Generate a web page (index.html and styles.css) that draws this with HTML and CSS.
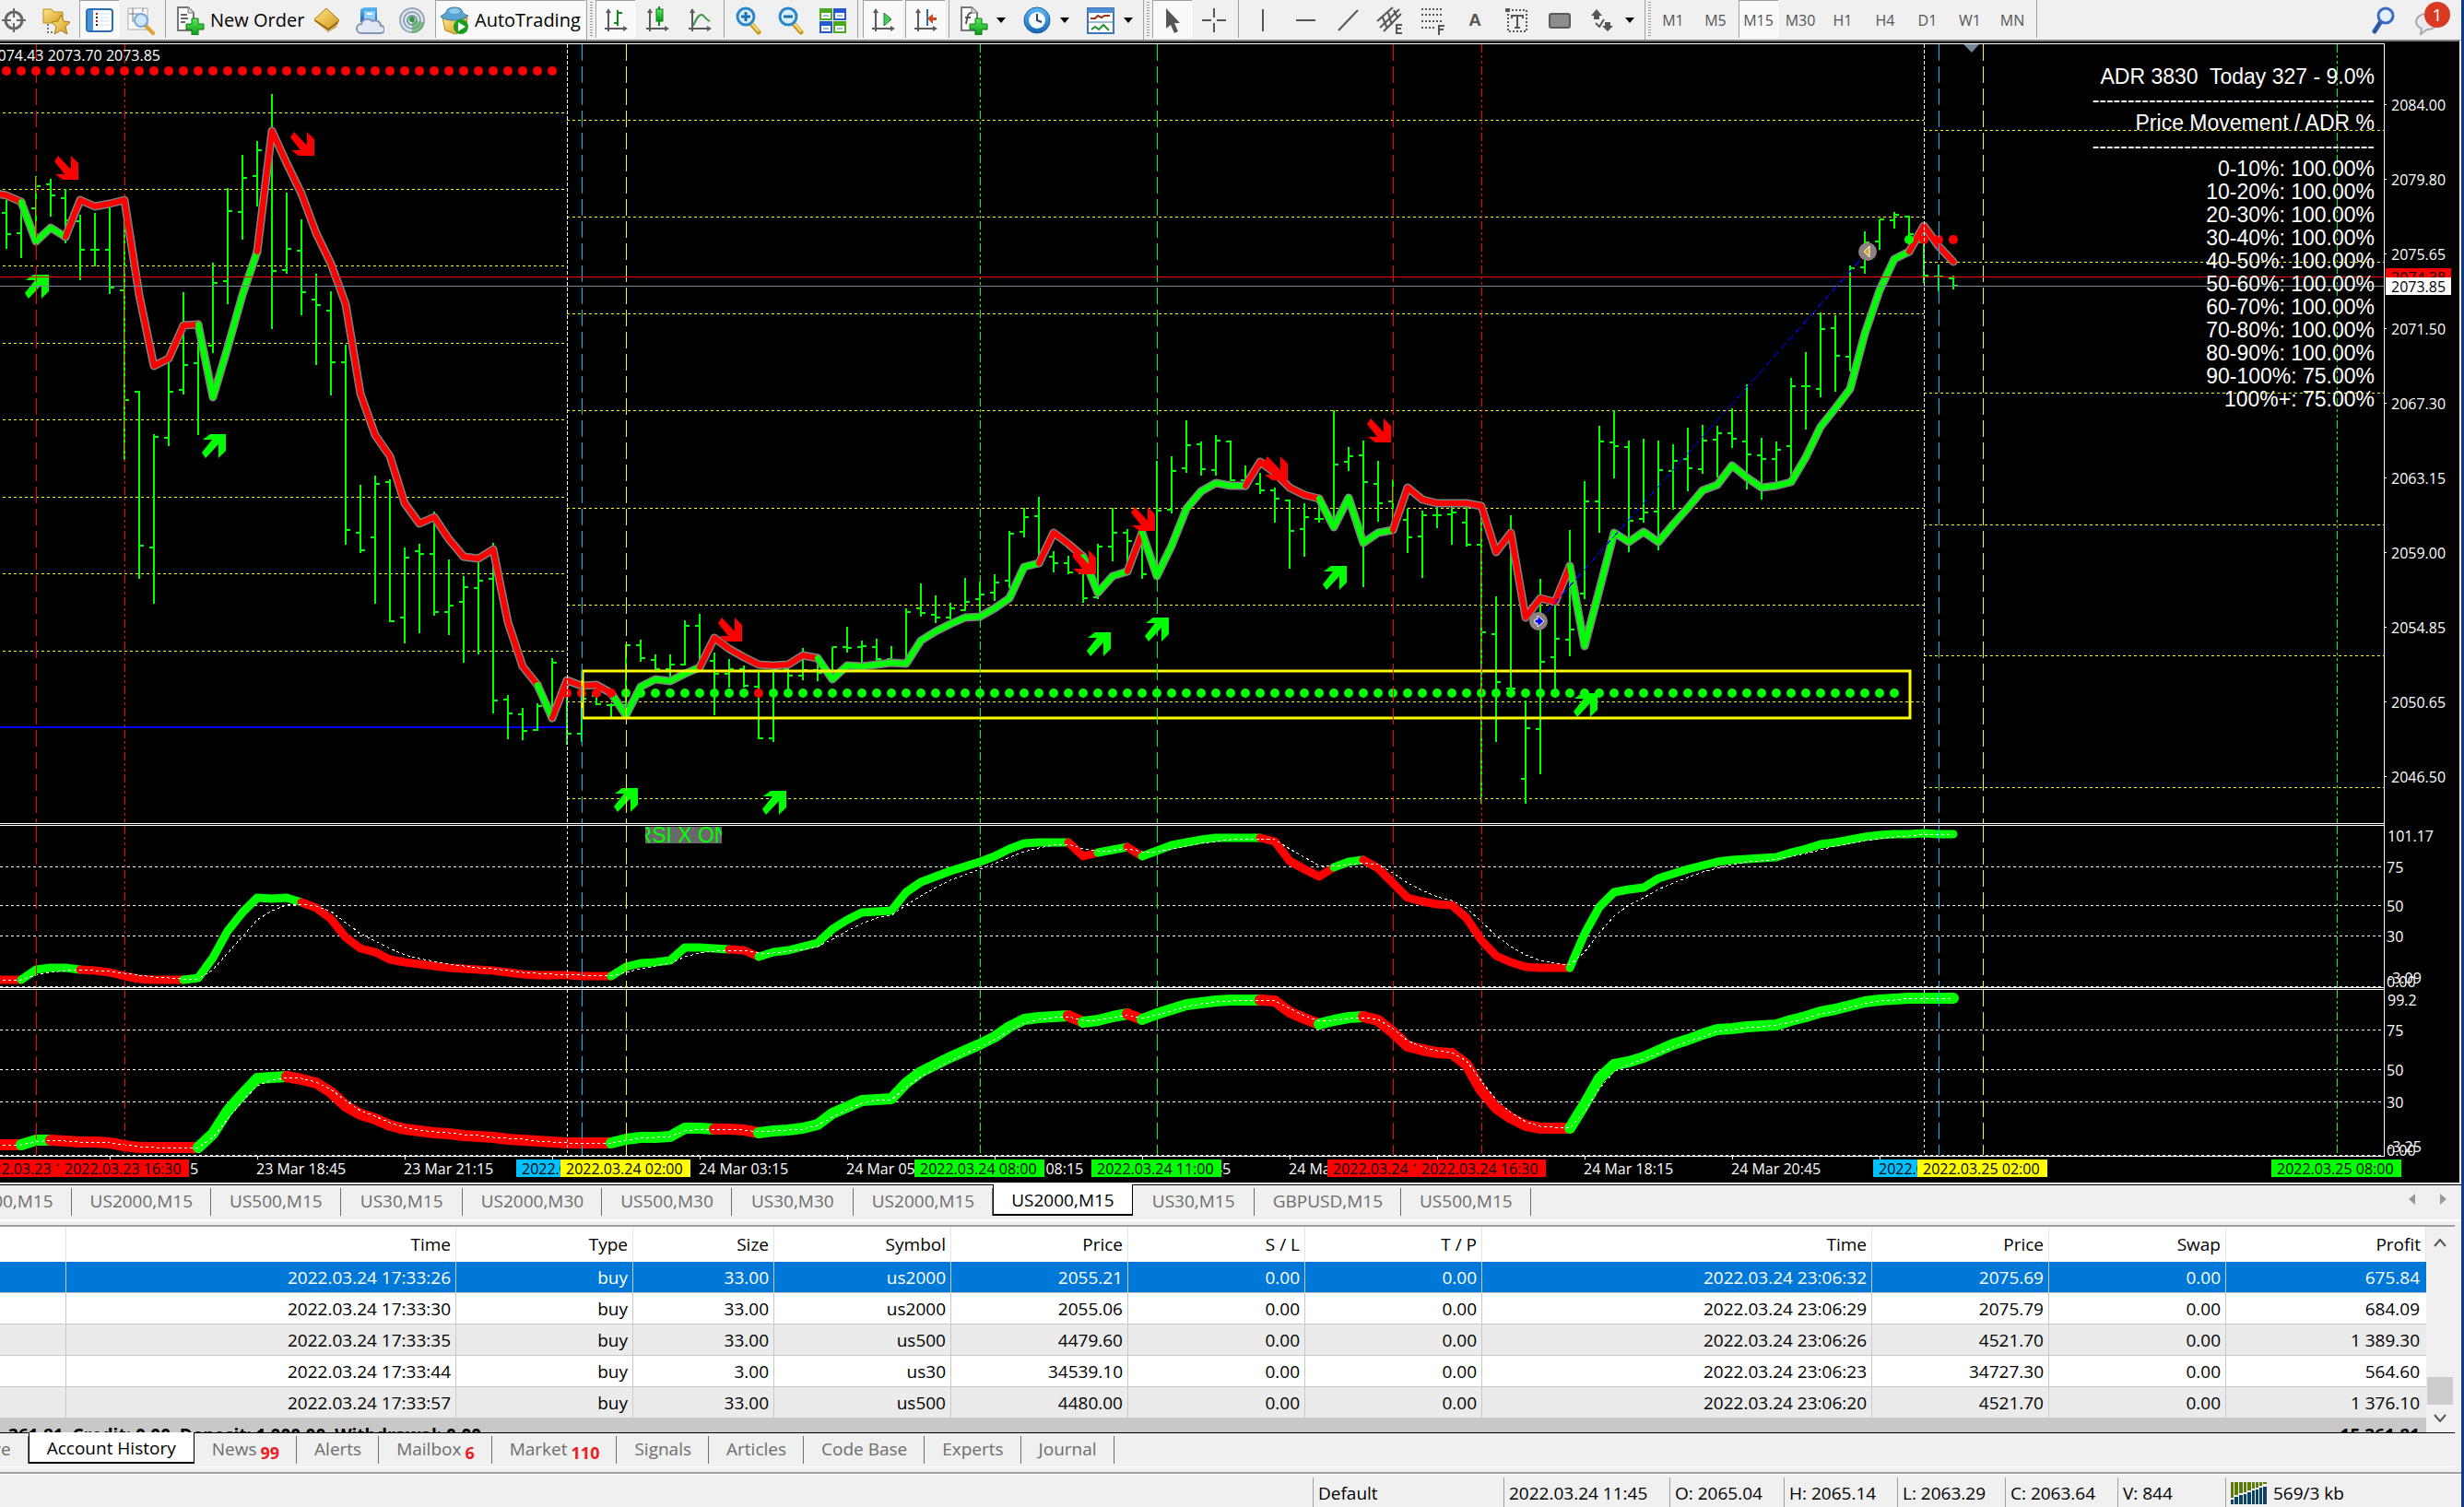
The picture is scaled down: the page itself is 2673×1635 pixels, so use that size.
FILE: index.html
```html
<!DOCTYPE html>
<html lang="en">
<head>
<meta charset="utf-8">
<title>US2000,M15</title>
<link rel="stylesheet" href="styles.css">
</head>
<body>
<svg class="defs" width="0" height="0" aria-hidden="true">
  <defs>
    <linearGradient id="gold" x1="0" y1="0" x2="1" y2="1"><stop offset="0" stop-color="#ffe78a"/><stop offset="1" stop-color="#d29a1c"/></linearGradient>
    <linearGradient id="blue" x1="0" y1="0" x2="0" y2="1"><stop offset="0" stop-color="#5fb8f5"/><stop offset="1" stop-color="#1766b5"/></linearGradient>
    <linearGradient id="green" x1="0" y1="0" x2="0" y2="1"><stop offset="0" stop-color="#5cec5c"/><stop offset="1" stop-color="#0a9a1a"/></linearGradient>
    <symbol id="axes" viewBox="0 0 32 32"><path d="M8 28V5M4 25h23" stroke="#5a5a5a" stroke-width="2" fill="none"/><path d="M5 8l3-5 3 5zM24 22l5 3-5 3z" fill="#5a5a5a"/></symbol>
    <symbol id="docplus" viewBox="0 0 32 32"><path d="M3 2h11l6 6v19H3z" fill="#fff" stroke="#777" stroke-width="2"/><path d="M14 2v6h6" fill="#ddd" stroke="#777"/><path d="M18 14h7v6h6v6h-6v6h-7v-6h-6v-6h6z" fill="url(#green)" stroke="#087a10"/></symbol>
    <symbol id="glass" viewBox="0 0 32 32"><path d="M19 20l8 9" stroke="#c99a22" stroke-width="5" stroke-linecap="round"/><path d="M19 19l8 9" stroke="#ffe27a" stroke-width="2"/><circle cx="13" cy="12" r="9" fill="#d7efff" stroke="#2d86c9" stroke-width="3"/></symbol>
  </defs>
</svg>
<div class="window">
  <header class="toolbar">
    <button class="tool first" aria-label="Crosshair target"><svg class="icon" viewBox="0 0 32 32"><circle cx="16" cy="16" r="9" fill="none" stroke="#666" stroke-width="3"/><path d="M16 3v10M16 19v10M3 16h10M19 16h10" stroke="#666" stroke-width="2"/></svg></button>
    <button class="tool" aria-label="Favorites"><svg class="icon" viewBox="0 0 32 32"><path d="M2 4h9l2 3h10v12H2z" fill="url(#gold)" stroke="#b98b1b"/><path d="M7 20v9h8" fill="none" stroke="#777" stroke-dasharray="2 2" stroke-width="2"/><path d="M21 10l3 7 7 1-5 5 2 8-7-4-7 4 2-8-5-5 7-1z" fill="url(#gold)" stroke="#a87812"/></svg></button>
    <button class="tool on" aria-label="Navigator"><svg class="icon" viewBox="0 0 32 32"><rect x="2" y="4" width="28" height="24" rx="3" fill="#fff" stroke="#2a6fb8" stroke-width="2"/><path d="M3 5h6v22H3z" fill="#4c94d8"/><path d="M12 9h2M12 17h2" stroke="#e00" stroke-width="2"/><path d="M12 13h2M12 21h2" stroke="#222" stroke-width="2"/><path d="M16 9h11M16 13h11M16 17h11M16 21h11" stroke="#cfe3f7"/></svg></button>
    <button class="tool" aria-label="Data window"><svg class="icon" viewBox="0 0 32 32"><path d="M2 3h21v23H2z" fill="#fafafa" stroke="#aaa"/><path d="M7 3v15M3 9h10M18 3v4" stroke="#777"/><path d="M21 22l8 8" stroke="#d6a32b" stroke-width="4" stroke-linecap="round"/><circle cx="16" cy="16" r="7" fill="#cde8fb" stroke="#7aa7cf" stroke-width="2"/></svg></button>
    <span class="sep"></span>
    <button class="tool wide"><svg class="icon" viewBox="0 0 32 32"><use href="#docplus"/><path d="M6 10h7M6 14h8M6 18h5" stroke="#666" stroke-width="2"/></svg>New Order</button>
    <button class="tool" aria-label="MetaEditor"><svg class="icon" viewBox="0 0 32 32"><path d="M15 3l14 13-3 7-9 6L2 17z" fill="#9a6410"/><path d="M15 3l14 13-12 9L2 15z" fill="url(#gold)" stroke="#b47a14"/><path d="M3 18l14 10 11-8" stroke="#fff2c0" fill="none"/></svg></button>
    <button class="tool" aria-label="Cloud"><svg class="icon" viewBox="0 0 32 32"><path d="M6 4l4-2h14v16H6z" fill="url(#blue)"/><path d="M10 6h12v12H10z" fill="#8fd0fa"/><path d="M13 9h6" stroke="#fff" stroke-width="2"/><path d="M7 30a5 5 0 010-10 7 7 0 0112-3 6 6 0 019 5 4 4 0 010 8z" fill="#e3e9f5" stroke="#8694b8" stroke-width="2"/></svg></button>
    <button class="tool" aria-label="Signals"><svg class="icon" viewBox="0 0 32 32"><circle cx="16" cy="16" r="13" fill="#e3eaf1" stroke="#9aa9ba" stroke-width="2"/><circle cx="16" cy="16" r="9" fill="none" stroke="#8ca0b6" stroke-width="2"/><circle cx="16" cy="16" r="5" fill="none" stroke="#7490aa" stroke-width="2"/><path d="M16 16v14c8 0 13-6 13-12" fill="#49a84f" opacity=".6"/><circle cx="16" cy="15" r="3" fill="#2f9a3c"/></svg></button>
    <button class="tool wide on auto"><svg class="icon" viewBox="0 0 32 32"><path d="M3 13l3 14 11 4 11-5 2-13z" fill="url(#gold)" stroke="#b4831a"/><path d="M1 12c3-3 5-2 7-7 2-4 14-4 16 0 1 4 4 5 7 6-5 6-24 7-30 1z" fill="#5aa3cf" stroke="#39789f"/><ellipse cx="16" cy="6" rx="6" ry="3" fill="#8cc8ea"/><circle cx="23" cy="23" r="8" fill="#14a01e"/><path d="M20 18v10l8-5z" fill="#fff"/></svg>AutoTrading</button>
    <span class="grip"></span>
    <button class="tool on" aria-label="Bar chart"><svg class="icon" viewBox="0 0 32 32"><use href="#axes"/><path d="M18 5v17M14 19h4M18 8h5" stroke="#0a8a1a" stroke-width="2"/></svg></button>
    <button class="tool" aria-label="Candlesticks"><svg class="icon" viewBox="0 0 32 32"><use href="#axes"/><path d="M18 1v21" stroke="#0a8a1a" stroke-width="2"/><rect x="15" y="4" width="7" height="13" fill="url(#green)" stroke="#0a7a1a"/></svg></button>
    <button class="tool" aria-label="Line chart"><svg class="icon" viewBox="0 0 32 32"><use href="#axes"/><path d="M9 22c4-9 6-12 9-12s4 5 9 7" stroke="#3b9a48" fill="none" stroke-width="2"/></svg></button>
    <span class="sep"></span>
    <button class="tool" aria-label="Zoom in"><svg class="icon" viewBox="0 0 32 32"><use href="#glass"/><path d="M8 12h10M13 7v10" stroke="#1e6fae" stroke-width="3"/></svg></button>
    <button class="tool" aria-label="Zoom out"><svg class="icon" viewBox="0 0 32 32"><use href="#glass"/><path d="M8 12h10" stroke="#1e6fae" stroke-width="3"/></svg></button>
    <button class="tool" aria-label="Tile windows"><svg class="icon" viewBox="0 0 32 32"><path d="M1 3h14v13H1zM16 17h14v13H16z" fill="#4ba81c"/><path d="M16 3h14v13H16zM1 17h14v13H1z" fill="#2358cf"/><path d="M3 8h10v6H3zM18 8h10v6H18zM3 22h10v6H3zM18 22h10v6H18z" fill="#fff"/><path d="M5 11h6M20 11h6M5 25h6M20 25h6" stroke="#9bc" stroke-width="2"/></svg></button>
    <span class="sep"></span>
    <button class="tool on" aria-label="Auto scroll"><svg class="icon" viewBox="0 0 32 32"><use href="#axes"/><path d="M17 8l8 7-8 7z" fill="#49c95a" stroke="#13862a"/></svg></button>
    <button class="tool on" aria-label="Chart shift"><svg class="icon" viewBox="0 0 32 32"><use href="#axes"/><path d="M18 4v18" stroke="#2a6fa8" stroke-width="2"/><path d="M18 14l6-5v4h4v3h-4v4z" fill="#d4471a"/></svg></button>
    <span class="sep"></span>
    <button class="tool" aria-label="Indicators"><svg class="icon" viewBox="0 0 32 32"><use href="#docplus"/><path d="M8 20c2-12 3-12 6-12M7 13h6" stroke="#555" fill="none" stroke-width="2"/></svg></button><button class="drop" aria-label="Indicator list"><svg viewBox="0 0 10 6"><path d="M0 0h10L5 6z"/></svg></button>
    <button class="tool" aria-label="Periods"><svg class="icon" viewBox="0 0 32 32"><circle cx="16" cy="16" r="14" fill="url(#blue)" stroke="#155c9f"/><circle cx="16" cy="16" r="9" fill="#f5fbff"/><path d="M16 9v7l5 2" stroke="#345" stroke-width="2" fill="none"/></svg></button><button class="drop" aria-label="Period list"><svg viewBox="0 0 10 6"><path d="M0 0h10L5 6z"/></svg></button>
    <button class="tool" aria-label="Templates"><svg class="icon" viewBox="0 0 32 32"><rect x="2" y="3" width="28" height="27" fill="#fff" stroke="#3d77b8" stroke-width="2"/><path d="M2 3h28v5H2z" fill="#4c8ed6"/><path d="M5 14h5l3-3 4 2 3-2h6" stroke="#a33018" fill="none" stroke-width="2"/><path d="M2 18h28" stroke="#3d77b8"/><path d="M6 26l4-3 4 3 5-5 6 6" stroke="#21902c" fill="none" stroke-width="2"/></svg></button><button class="drop" aria-label="Template list"><svg viewBox="0 0 10 6"><path d="M0 0h10L5 6z"/></svg></button>
    <span class="grip"></span>
    <button class="tool on" aria-label="Cursor"><svg class="icon" viewBox="0 0 32 32"><path d="M9 3v22l5-4 4 9 4-2-4-9h6z" fill="#555"/></svg></button>
    <button class="tool" aria-label="Crosshair"><svg class="icon" viewBox="0 0 32 32"><path d="M16 3v10M16 19v10M3 16h10M19 16h10" stroke="#555" stroke-width="2"/></svg></button>
    <span class="sep"></span>
    <button class="tool" aria-label="Vertical line"><svg class="icon" viewBox="0 0 32 32"><path d="M16 4v24" stroke="#555" stroke-width="2"/></svg></button>
    <button class="tool" aria-label="Horizontal line"><svg class="icon" viewBox="0 0 32 32"><path d="M6 16h21" stroke="#555" stroke-width="2"/></svg></button>
    <button class="tool" aria-label="Trendline"><svg class="icon" viewBox="0 0 32 32"><path d="M6 27L27 5" stroke="#555" stroke-width="2"/></svg></button>
    <button class="tool" aria-label="Channel"><svg class="icon" viewBox="0 0 32 32"><path d="M2 17L19 2M5 24L26 4M9 28L28 9M8 13l5 12M14 8l4 13M20 5l4 8" stroke="#555" stroke-width="2"/><path d="M29 21h-6v9h6M23 25h5" stroke="#555" fill="none" stroke-width="2"/></svg></button>
    <button class="tool" aria-label="Fibonacci"><svg class="icon" viewBox="0 0 32 32"><path d="M4 4h24M4 10h24M4 17h24M4 24h15" stroke="#555" stroke-width="2" stroke-dasharray="2 2"/><path d="M29 22h-6v10M23 26h5" stroke="#555" fill="none" stroke-width="2"/></svg></button>
    <button class="tool glyph">A</button>
    <button class="tool" aria-label="Text label"><svg class="icon" viewBox="0 0 32 32"><rect x="6" y="5" width="20" height="23" fill="none" stroke="#555" stroke-width="2" stroke-dasharray="2 2"/><path d="M10 11h12M16 11v13M13 24h6M10 10v4M22 10v4" stroke="#555" stroke-width="2"/><path d="M3 3h5v4H3z" fill="#555"/></svg></button>
    <button class="tool" aria-label="Rectangle"><svg class="icon" viewBox="0 0 32 32"><rect x="5" y="9" width="22" height="15" rx="2" fill="#8c8c8c" stroke="#5a5a5a" stroke-width="2"/></svg></button>
    <button class="tool" aria-label="Arrows"><svg class="icon" viewBox="0 0 32 32"><path d="M10 4l6 7h-3v4H7v-4H4zM22 28l6-6h-3v-4h-6v4h-3z" fill="#555"/><path d="M9 19l4 4 5-8" stroke="#555" fill="none" stroke-width="2"/></svg></button><button class="drop" aria-label="Arrow list"><svg viewBox="0 0 10 6"><path d="M0 0h10L5 6z"/></svg></button>
    <span class="grip"></span>
    <button class="tool period">M1</button>
    <button class="tool period">M5</button>
    <button class="tool period on">M15</button>
    <button class="tool period">M30</button>
    <button class="tool period">H1</button>
    <button class="tool period">H4</button>
    <button class="tool period">D1</button>
    <button class="tool period">W1</button>
    <button class="tool period">MN</button>
    <span class="sep"></span>
    <div class="tools-end">
      <button class="tool" aria-label="Search"><svg class="icon" viewBox="0 0 32 32"><path d="M13 17L6 28" stroke="#2a58a8" stroke-width="5" stroke-linecap="round"/><circle cx="18" cy="11" r="8" fill="#e6f1ff" stroke="#3a6cc4" stroke-width="3"/></svg></button>
      <button class="tool chat"><svg class="icon" viewBox="0 0 32 32" aria-hidden="true"><path d="M13 9c7 0 12 4 12 9s-5 8-11 8l-7 5 1-6c-4-2-6-4-6-7 0-5 5-9 11-9z" fill="#e9e9ef" stroke="#aaa" stroke-width="2"/></svg><span class="badge">1</span></button>
    </div>
  </header>

  <main class="chart">
    <svg id="plot" viewBox="0 45 2668 1238" role="img" aria-label="US2000 M15 chart"></svg>
  </main>

  <nav class="tabs charts">
    <button class="tab cut">US500,M15</button>
    <button class="tab">US2000,M15</button>
    <button class="tab">US500,M15</button>
    <button class="tab">US30,M15</button>
    <button class="tab">US2000,M30</button>
    <button class="tab">US500,M30</button>
    <button class="tab">US30,M30</button>
    <button class="tab">US2000,M15</button>
    <button class="tab active">US2000,M15</button>
    <button class="tab">US30,M15</button>
    <button class="tab">GBPUSD,M15</button>
    <button class="tab">US500,M15</button>
    <div class="scrolls">
      <button class="arrow" aria-label="Scroll tabs left"><svg viewBox="0 0 7 12"><path d="M7 0v12L0 6z" fill="#999"/></svg></button>
      <button class="arrow" aria-label="Scroll tabs right"><svg viewBox="0 0 7 12"><path d="M0 0v12l7-6z" fill="#999"/></svg></button>
    </div>
  </nav>

  <section class="terminal">
    <div class="history">
      <table>
        <colgroup><col><col class="w-time"><col class="w-num"><col class="w-size"><col class="w-num"><col class="w-num"><col class="w-num"><col class="w-num"><col class="w-time"><col class="w-num"><col class="w-num"><col class="w-profit"></colgroup>
        <thead><tr><th></th><th>Time</th><th>Type</th><th>Size</th><th>Symbol</th><th>Price</th><th>S / L</th><th>T / P</th><th>Time</th><th>Price</th><th>Swap</th><th>Profit</th></tr></thead>
        <tbody>
          <tr class="selected"><td></td><td>2022.03.24 17:33:26</td><td>buy</td><td>33.00</td><td>us2000</td><td>2055.21</td><td>0.00</td><td>0.00</td><td>2022.03.24 23:06:32</td><td>2075.69</td><td>0.00</td><td>675.84</td></tr>
          <tr><td></td><td>2022.03.24 17:33:30</td><td>buy</td><td>33.00</td><td>us2000</td><td>2055.06</td><td>0.00</td><td>0.00</td><td>2022.03.24 23:06:29</td><td>2075.79</td><td>0.00</td><td>684.09</td></tr>
          <tr class="alt"><td></td><td>2022.03.24 17:33:35</td><td>buy</td><td>33.00</td><td>us500</td><td>4479.60</td><td>0.00</td><td>0.00</td><td>2022.03.24 23:06:26</td><td>4521.70</td><td>0.00</td><td>1 389.30</td></tr>
          <tr><td></td><td>2022.03.24 17:33:44</td><td>buy</td><td>3.00</td><td>us30</td><td>34539.10</td><td>0.00</td><td>0.00</td><td>2022.03.24 23:06:23</td><td>34727.30</td><td>0.00</td><td>564.60</td></tr>
          <tr class="alt"><td></td><td>2022.03.24 17:33:57</td><td>buy</td><td>33.00</td><td>us500</td><td>4480.00</td><td>0.00</td><td>0.00</td><td>2022.03.24 23:06:20</td><td>4521.70</td><td>0.00</td><td>1 376.10</td></tr>
        </tbody>
        <tfoot><tr><td colspan="11">361.81&nbsp; Credit: 0.00&nbsp; Deposit: 1 000.00&nbsp; Withdrawal: 0.00</td><td>15 361.81</td></tr></tfoot>
      </table>
    </div>
    <div class="scrollbar">
      <button class="arrow" aria-label="Scroll up"><svg viewBox="0 0 14 10"><path d="M1 9l6-7 6 7" fill="none" stroke="#555" stroke-width="2"/></svg></button>
      <span class="thumb"></span>
      <button class="arrow" aria-label="Scroll down"><svg viewBox="0 0 14 10"><path d="M1 1l6 7 6-7" fill="none" stroke="#555" stroke-width="2"/></svg></button>
    </div>
  </section>

  <nav class="tabs panels">
    <button class="tab cut">Exposure</button>
    <button class="tab active">Account History</button>
    <button class="tab">News<b>99</b></button>
    <button class="tab">Alerts</button>
    <button class="tab">Mailbox<b>6</b></button>
    <button class="tab">Market<b>110</b></button>
    <button class="tab">Signals</button>
    <button class="tab">Articles</button>
    <button class="tab">Code Base</button>
    <button class="tab">Experts</button>
    <button class="tab">Journal</button>
  </nav>

  <footer class="status">
    <span></span><span>Default</span><span>2022.03.24 11:45</span><span>O: 2065.04</span><span>H: 2065.14</span><span>L: 2063.29</span><span>C: 2063.64</span><span>V: 844</span>
    <span class="net"><svg viewBox="0 0 39 24" aria-hidden="true"><path d="M0 0h3v17H0zM4 0h4v14H4zM9 0h4v12H9zM14 0h3v11h-3zM18 0h4v9h-4zM23 0h3v7h-3zM27 0h3v6h-3zM31 0h3v4h-3zM35 0h4v2h-4z" fill="#5d7a0c"/><path d="M0 19h3v5H0zM4 16h4v8H4zM9 14h4v10H9zM14 13h3v11h-3zM18 11h4v13h-4zM23 9h3v15h-3zM27 8h3v16h-3zM31 6h3v18h-3zM35 5h4v19h-4z" fill="#0b4462"/></svg>569/3 kb</span>
  </footer>
</div>
<script src="chart.js"></script>
</body>
</html>
```
FILE: styles.css
```css
* { box-sizing: border-box; }
body {
  margin: 0;
  background: #0b3a86;
  color: #000;
  font: 19px/24px "Open Sans", "Noto Sans", sans-serif;
}
button {
  border: 0;
  margin: 0;
  padding: 0;
  background: none;
  color: inherit;
  font: inherit;
  white-space: nowrap;
}
.defs { position: absolute; }
.window {
  display: flex;
  flex-direction: column;
  min-height: 100vh;
  margin-right: 3px;
  background: #f0f0f0;
  overflow: hidden;
}

/* Toolbar */
.toolbar {
  display: flex;
  height: 43px;
}
.tool {
  display: flex;
  flex: none;
  align-items: center;
  justify-content: center;
  width: 46px;
}
.first { margin-left: -8px; }
.icon {
  flex: none;
  width: 32px;
  height: 32px;
}
.wide {
  justify-content: flex-start;
  gap: 6px;
  width: 149px;
  padding-left: 7px;
  font-size: 20px;
}
.on {
  background: #f9f9f9;
  box-shadow: inset 1px 1px #a0a0a0, inset -1px -1px #fff;
  margin: 0 1px 2px 2px;
  padding-top: 2px;
  width: 43px;
}
.auto {
  width: 163px;
  padding-left: 5px;
}
.sep {
  flex: none;
  width: 7px;
  margin-bottom: 2px;
  background: linear-gradient(#a0a0a0, #a0a0a0) 3px 0 / 1px 100% no-repeat;
}
.grip {
  flex: none;
  width: 8px;
  border-left: 1px solid #a0a0a0;
  background: repeating-linear-gradient(#999 0 1px, #f0f0f0 1px 3px) 3px 2px / 3px 38px no-repeat;
}
.drop {
  display: flex;
  flex: none;
  align-items: center;
  width: 23px;
  padding-left: 2px;
}
.drop svg {
  width: 10px;
  height: 6px;
}
.glyph {
  color: #555;
  font: bold 19px/40px "Liberation Sans", sans-serif;
}
.period {
  color: #555;
  font-size: 16px;
  font-weight: 500;
}
.tools-end {
  display: flex;
  gap: 3px;
  margin-left: auto;
  padding-right: 12px;
}
.chat { position: relative; }
.badge {
  position: absolute;
  top: 2px;
  right: 0;
  width: 28px;
  height: 28px;
  border-radius: 14px;
  background: #d93a22;
  color: #fff;
  line-height: 28px;
}

/* Chart */
.chart {
  border-top: 2px solid #808080;
  border-right: 2px solid #fff;
  background: #000;
}
#plot {
  display: block;
  width: 100%;
  height: auto;
  font: 16px "Open Sans", "Noto Sans", sans-serif;
}
.chart .stats, .chart .tag { font: 23px "Liberation Sans", Arial, sans-serif; }

/* Tab strips */
.tabs {
  display: flex;
  align-items: flex-start;
  border-bottom: 2px solid #fff;
  color: #6d6d6d;
}
.charts {
  height: 40px;
  border-top: 1px solid #000;
  margin-top: 2px;
}
.tab {
  position: relative;
  flex: none;
  height: 34px;
  padding: 0 20px;
}
.charts .tab { min-width: 132px; }
.tab::after {
  content: "";
  position: absolute;
  top: 3px;
  right: 0;
  width: 1px;
  height: 30px;
  background: #6d6d6d;
}
.charts .cut { margin-left: -63px; }
.tab.active {
  margin-top: -1px;
  border: 1px solid #000;
  border-top: 0;
  border-bottom-width: 2px;
  background: #fff;
  color: #000;
}
.charts .active, .panels .active { padding-top: 2px; }
.charts .active {
  padding-right: 19px;
  padding-left: 19px;
}
.tab.active::after { display: none; }
.arrow {
  display: flex;
  justify-content: center;
}
.scrolls {
  display: flex;
  gap: 27px;
  margin-left: auto;
  padding: 9px 16px 0 0;
}
.scrolls svg {
  width: 7px;
  height: 12px;
}

/* Account history */
.terminal {
  display: flex;
  margin: 4px 7px 0 0;
  padding-right: 2px;
  border-top: 2px solid #a0a0a0;
}
.history {
  flex: 1;
  height: 223px;
  overflow: hidden;
  background: #fff;
}
table {
  width: 100%;
  border-collapse: separate;
  border-spacing: 0;
  table-layout: fixed;
}
.w-time { width: 423px; }
.w-num { width: 192px; }
.w-size { width: 153px; }
.w-profit { width: 217px; }
th, td {
  height: 34px;
  padding: 1px 5px 0 0;
  border-right: 1px solid #c8c8c8;
  border-bottom: 1px solid #c8c8c8;
  font-weight: 400;
  text-align: right;
}
th {
  height: 38px;
  padding-top: 0;
  border-right-color: #e5e5e5;
  border-bottom: 0;
}
td:last-child { padding-right: 7px; border-right: 0; }
.selected { background: #0078d7; color: #fff; }
.alt { background: #ebebeb; }
tfoot { background: #c8c8c8; }
tfoot td {
  border: 0;
  font-weight: 700;
}
tfoot td:first-child {
  padding-left: 9px;
  text-align: left;
}
.scrollbar {
  display: flex;
  flex-direction: column;
  width: 29px;
  padding: 12px 0 10px 1px;
}
.scrollbar svg {
  width: 14px;
  height: 10px;
}
.thumb {
  height: 30px;
  margin: auto 0 10px;
  background: #cdcdcd;
}

/* Terminal panels */
.panels {
  height: 38px;
  margin-right: 7px;
  border-top: 1px solid #000;
  border-bottom-width: 1px;
}
.panels .tab {
  padding-right: 19px;
  padding-left: 19px;
}
.panels .cut { margin-left: -90px; }
.panels b {
  margin-left: 4px;
  color: #ed1c24;
  font-size: 18px;
  vertical-align: -4px;
  line-height: 10px;
}

/* Status bar */
.status {
  display: grid;
  flex: 1;
  grid-template-columns: 1fr 207px 180px 124px 123px 117px 122px 117px 256px;
  margin-top: 5px;
  padding-top: 4px;
  border-top: 2px solid #a0a0a0;
  box-shadow: inset 0 1px #fff;
}
.status span {
  padding: 5px 0 0 5px;
  border-left: 1px solid #a0a0a0;
}
.status span:first-child { border: 0; }
.status .net {
  display: flex;
  gap: 7px;
}
.net svg {
  width: 39px;
  height: 24px;
}
```
FILE: chart.js
```js
const plot = document.getElementById('plot');
const GREEN = '#00ff00', RED = '#ff0000', YELLOW = '#ffff00', WHITE = '#ffffff', SKY = '#00bfff';
const X = i => 7 + 16 * i;

function add(tag, attrs, text) {
  const el = document.createElementNS('http://www.w3.org/2000/svg', tag);
  for (const k in attrs) el.setAttribute(k, attrs[k]);
  if (text) el.textContent = text;
  plot.appendChild(el);
  return el;
}
// Straight rule; hairlines are centred on the pixel row or column they fill
function line(x1, y1, x2, y2, stroke, width = 1, dash) {
  const half = width % 2 / 2;
  const dx = x1 === x2 ? half : 0, dy = y1 === y2 ? half : 0;
  const a = { x1: x1 + dx, y1: y1 + dy, x2: x2 + dx, y2: y2 + dy, stroke, 'stroke-width': width };
  if (dash) a['stroke-dasharray'] = dash;
  add('line', a);
}
const label = (x, y, text, fill) => add('text', { x, y: y + 6, fill: fill || WHITE }, text);

// Horizontal grid levels for the previous, current and next session
for (const y of [122, 205, 288, 372, 455, 539, 622, 706]) line(3, y, 613, y, YELLOW, 1, '3 3');
for (const y of [130, 235, 340, 445, 551, 656, 761, 866]) line(615, y, 2087, y, YELLOW, 1, '3 3');
for (const y of [141, 284, 426, 569, 711, 854]) line(2087, y, 2586, y, YELLOW, 1, '3 3');
for (const y of [940, 982, 1015, 1070, 1117, 1160, 1195, 1253]) line(0, y, 2586, y, WHITE, 1, '3 3');
line(0, 789, 615, 789, '#0000ff', 2);

// Bars: high, low, open, close
const bars = [
  [217,270,231,254],[218,280,253,226],[191,262,226,202],[194,235,200,212],[205,264,215,239],[233,304,240,271],[231,289,271,271],[225,319,271,312],
  [214,499,315,434],[424,628,425,592],[471,655,594,474],[392,484,475,425],[317,428,423,396],[353,472,394,375],[285,383,375,307],[204,330,305,229],
  [168,260,230,193],[153,224,191,163],[102,357,163,294],[209,297,293,270],[238,342,272,317],[297,396,325,331],[316,429,337,393],[374,591,393,575],
  [526,600,578,597],[516,655,583,525],[520,675,523,674],[594,698,670,605],[590,687,598,601],[555,668,601,664],[607,689,664,657],[625,719,653,637],
  [607,710,638,630],[589,774,628,760],[754,802,759,774],[768,803,775,793],[763,793,792,766],[714,778,766,719],[737,808,740,796],[745,805,796,758],
  [747,765,755,764],[763,778,765,765],[699,778,765,700],[694,718,700,714],[710,727,716,726],[710,737,726,721],[673,722,721,679],[666,723,679,722],
  [708,776,717,731],[715,746,731,726],[722,746,726,744],[728,802,745,801],[723,805,801,726],[722,748,726,733],[703,738,733,727],[715,739,727,730],
  [702,730,730,702],[680,708,702,703],[695,720,702,701],[693,717,702,715],[701,717,715,717],[660,718,717,664],[633,669,660,665],[646,676,667,670],
  [654,672,670,660],[627,663,662,653],[631,667,650,645],[623,652,643,632],[576,638,630,579],[551,583,577,561],[539,610,560,604],[598,621,604,611],
  [603,623,611,621],[620,654,622,649],[590,650,648,593],[551,609,593,578],[574,620,578,587],[575,628,587,623],[500,625,623,554],[495,557,553,511],
  [456,513,508,483],[479,516,482,509],[472,516,510,478],[478,522,479,521],[505,525,521,521],[513,536,525,532],[529,567,532,541],[542,617,543,576],
  [546,604,574,561],[545,567,563,563],[445,572,563,504],[485,511,501,495],[478,637,494,523],[500,566,525,546],[520,575,544,560],[552,600,564,583],
  [554,627,582,559],[547,573,559,559],[550,591,558,556],[550,593,567,591],[560,872,591,686],[647,805,688,740],[559,748,747,747],[760,872,845,790],
  [628,840,791,718],[650,757,713,693],[575,712,694,683],[522,650,644,544],[462,578,544,479],[445,519,480,484],[478,599,485,565],[476,567,563,556],
  [478,597,555,510],[482,553,511,500],[464,533,498,508],[461,514,509,478],[462,518,477,470],[443,486,470,476],[417,531,479,493],[475,542,494,498],
  [479,524,498,488],[410,522,484,419],[382,466,419,419],[339,431,422,357],[342,425,356,386],[288,403,387,291],[251,297,290,263],[238,271,262,238],
  [230,248,239,233],[234,270,235,254],[263,307,263,299],[287,316,300,300],[299,314,302,310]
];
bars.forEach(([h, l, o, c], i) => {
  const x = X(i);
  line(x, h, x, l, GREEN, 2);
  line(x - 5, o, x, o, GREEN, 2);
  line(x, c, x + 5, c, GREEN, 2);
});

// A run is [colour, first index, values...]; each run begins on the last point of the one before
function drawRuns(runs, width, outline) {
  const paths = runs.map(([color, start, ...ys]) => ({ color, d: ys.map((y, k) => X(start + k) + ',' + y).join(' ') }));
  const common = { fill: 'none', 'stroke-linejoin': 'round', 'stroke-linecap': 'round' };
  if (outline) paths.forEach(p => add('polyline', { points: p.d, stroke: '#808080', 'stroke-width': width + 3, ...common }));
  paths.forEach(p => add('polyline', { points: p.d, stroke: p.color, 'stroke-width': width, ...common }));
}
function drawSignal(runs, alpha) {
  const ys = [];
  runs.forEach(([, start, ...v]) => v.forEach((y, k) => { ys[start + k + 1] = y; }));
  let s = ys[0];
  const pts = ys.map((y, k) => { s += alpha * (y - s); return X(k - 1) + ',' + Math.round(s); });
  add('polyline', { points: pts.join(' '), fill: 'none', stroke: WHITE, 'stroke-width': 1, 'stroke-dasharray': '3 3', 'shape-rendering': 'crispEdges' });
}

// Session markers
const DASH = '18 6', DASHDOT = '9 3 3 3 3 3', SHORT = '3 3';
const marks = [[39,RED,DASH],[135,RED,DASHDOT],[615,WHITE,SHORT],[631,SKY,DASH],[679,YELLOW,DASH],[1063,GREEN,DASHDOT],[1255,GREEN,DASH],
  [1511,RED,DASH],[1607,RED,DASHDOT],[2087,WHITE,SHORT],[2103,SKY,DASH],[2151,YELLOW,DASH],[2535,GREEN,DASHDOT]];
const drawMarks = () => marks.forEach(([x, color, dash]) => {
  line(x, 48, x, 893, color, 1, color === WHITE ? '4 2' : dash);
  line(x, 896, x, 1071, color, 1, dash);
  line(x, 1074, x, 1253, color, 1, dash);
});

drawRuns([
  [RED,-1,209,212,219],[GREEN,1,219,262,247,257],[RED,4,257,217,224,221,217,320,397,389,353,352],[GREEN,13,352,431,377,320,273],
  [RED,17,273,142,177,210,253,286,330,427,472,495,546,568,561,585,604,606,596,675,723,743],[GREEN,36,743,779],[RED,37,779,738,744,743,752],
  [GREEN,41,752,776,745,737,739,731,724],[RED,47,724,692,704,713,721,722,721,711,714],
  [GREEN,55,714,737,722,723,721,719,720,695,685,677,670,669,660,649,615,611],[RED,70,611,578,590,604],[GREEN,73,604,643,625,620],[RED,76,620,578],
  [GREEN,77,578,625,592,552,533,524,527,527],[RED,84,527,501,513,529,537,541],[GREEN,89,541,572,540,589,578,575],
  [RED,94,575,529,542,546,546,546,549,599,578,670,649,653,614],
  [GREEN,106,614,701,640,578,588,577,588,569,551,532,526,505,518,529,527,523,496,463,443,422,362,315,281,273],[RED,129,273,245,267,284]
], 6, true);

const dot = (i, y, fill) => add('circle', { cx: X(i), cy: y, r: 5, fill });
for (let i = 0; i < 38; i++) dot(i, 77, RED);
for (let i = 38; i < 129; i++) dot(i, 752, i < 42 || i === 51 ? RED : GREEN);
for (let i = 129; i < 133; i++) dot(i, 260, i === 129 ? GREEN : RED);
add('rect', { x: 632, y: 728, width: 1440, height: 51, fill: 'none', stroke: YELLOW, 'stroke-width': 3 });

for (const [x, y] of [[59,169],[315,143],[779,670],[1163,597],[1227,550],[1371,495],[1483,454]])
  add('path', { d: 'M4 0L18 15V0L26 8V26H9L1 20H11L0 6Z', fill: RED, transform: `translate(${x} ${y})` });
for (const [x, y] of [[27,298],[219,471],[666,855],[827,858],[1179,686],[1242,670],[1435,614],[1707,752]])
  add('path', { d: 'M4 26L18 11V26L26 18V0H9L1 6H11L0 20Z', fill: GREEN, transform: `translate(${x} ${y})` });

const sub1 = [
  [RED,-1,1063,1063,1063],[GREEN,1,1063,1052,1050,1050,1052],[RED,5,1052,1053,1055,1059,1062,1063,1063,1063],
  [GREEN,12,1063,1061,1039,1010,990,974,975,974,979],
  [RED,20,979,985,997,1017,1029,1033,1041,1044,1046,1048,1050,1051,1052,1053,1055,1057,1058,1058,1058,1059,1059,1059],
  [GREEN,41,1059,1049,1045,1044,1042,1028,1028,1029,1030],[RED,49,1030,1031,1038],
  [GREEN,51,1038,1033,1031,1027,1023,1008,998,990,989,988,968,957,951,945,940,935,929,921,915,914,914,914],
  [RED,72,914,929,925],[GREEN,74,925,922,919],[RED,76,919,929],[GREEN,77,929,923,917,914,911,909,909,909,909],
  [RED,85,909,913,934,943,951,941],[GREEN,90,941,935,933],[RED,92,933,942,958,974,978,981,982,996,1020,1037,1044,1049,1050,1050,1050],
  [GREEN,106,1050,1013,984,968,965,963,953,948,943,939,935,933,932,931,930,925,921,916,914,911,908,906,905,905,904,905,905]
];
const sub2 = [
  [RED,-1,1242,1242,1242],[GREEN,1,1242,1237,1237],[RED,3,1237,1238,1239,1239,1240,1243,1245,1245,1245,1245,1245],
  [GREEN,13,1245,1230,1205,1187,1170,1169,1168],
  [RED,19,1168,1171,1175,1185,1200,1209,1214,1221,1225,1227,1229,1230,1232,1233,1234,1236,1237,1238,1239,1240,1240,1240,1240],
  [GREEN,41,1240,1236,1234,1234,1233,1224,1224,1225],[RED,48,1225,1225,1226,1229],
  [GREEN,51,1229,1227,1226,1224,1220,1208,1201,1194,1193,1192,1175,1163,1155,1147,1140,1133,1125,1114,1106,1104,1103,1102],
  [RED,72,1102,1109],[GREEN,73,1109,1107,1103,1100],[RED,76,1100,1106],[GREEN,77,1106,1100,1095,1090,1088,1086,1085,1085,1085],
  [RED,85,1085,1086,1098,1105,1111],[GREEN,89,1111,1107,1104,1103],[RED,92,1103,1107,1120,1135,1139,1142,1143,1155,1183,1202,1213,1221,1224,1224,1224],
  [GREEN,106,1224,1198,1170,1155,1152,1147,1140,1133,1128,1122,1117,1116,1114,1113,1112,1107,1103,1098,1095,1091,1087,1085,1084,1083,1083,1083,1083]
];
drawRuns(sub1, 9);
drawSignal(sub1, 0.42);
drawRuns(sub2, 12);
drawSignal(sub2, 0.7);
drawMarks();

// Closed trade
line(0, 300, 2586, 300, RED);
line(0, 310, 2586, 310, '#778899');
add('line', { x1: 1669, y1: 674, x2: 2026, y2: 273, stroke: '#0000ff', 'stroke-dasharray': '9 3', 'shape-rendering': 'crispEdges' });
add('circle', { cx: 1669, cy: 674, r: 10, fill: '#8c8080' });
add('path', { d: 'M1665 672h3v-4l7 6-7 6v-4h-3z', fill: '#0000ff', stroke: WHITE });
add('circle', { cx: 2026, cy: 273, r: 10, fill: '#8c8080' });
add('path', { d: 'M2028 267l-6 6 6 6z', fill: '#daa520', stroke: WHITE });
add('path', { d: 'M2130 48h17l-8 9z', fill: '#778899' });

// Indicator tag, clipped to its box
const tag = add('svg', { x: 700, y: 897, width: 83, height: 18, overflow: 'hidden' });
const bg = add('rect', { width: 83, height: 18, fill: '#696969' });
const caption = add('text', { x: 41, y: 17, fill: GREEN, class: 'tag', 'text-anchor': 'middle' }, 'RSI X ON');
tag.append(bg, caption);

// Frames
for (const y of [47, 893, 895, 1071, 1073, 1254]) line(0, y, 2587, y, WHITE);
line(2586, 47, 2586, 1255, WHITE);

// Price scale
['2084.00','2079.80','2075.65','2071.50','2067.30','2063.15','2059.00','2054.85','2050.65','2046.50'].forEach((t, k) => {
  line(2586, 113 + 81 * k, 2589, 113 + 81 * k, WHITE);
  label(2594, 114 + 81 * k, t);
});
add('rect', { x: 2588, y: 291, width: 71, height: 19, fill: RED });
label(2594, 301, '2074.38', '#000');
add('rect', { x: 2588, y: 301, width: 71, height: 19, fill: WHITE });
label(2594, 311, '2073.85', '#000');
for (const [x, y, t] of [[2590,907,'101.17'],[2589,941,'75'],[2589,983,'50'],[2589,1016,'30'],[2590,1061,'-3.09'],[2589,1065,'0.00'],
  [2590,1085,'99.2'],[2589,1118,'75'],[2589,1161,'50'],[2589,1196,'30'],[2590,1244,'-3.25'],[2589,1248,'0.00']]) label(x, y, t);

// Time scale
['23 Mar 16:15','23 Mar 18:45','23 Mar 21:15','','24 Mar 03:15','24 Mar 05:45','24 Mar 08:15','24 Mar 10:45','24 Mar 13:15','','24 Mar 18:15','24 Mar 20:45',''].forEach((t, k) => {
  line(119 + 160 * k, 1254, 119 + 160 * k, 1258, WHITE);
  if (t) label(118 + 160 * k, 1268, t);
});
for (const [x, color, t] of [[39,RED,'2022.03.23 10:30'],[135,RED,'2022.03.23 16:30'],[631,SKY,'2022.03.23 23:00'],[679,YELLOW,'2022.03.24 02:00'],
  [1063,GREEN,'2022.03.24 08:00'],[1255,GREEN,'2022.03.24 11:00'],[1511,RED,'2022.03.24 14:00'],[1607,RED,'2022.03.24 16:30'],
  [2103,SKY,'2022.03.24 23:00'],[2151,YELLOW,'2022.03.25 02:00'],[2535,GREEN,'2022.03.25 08:00']]) {
  add('rect', { x: x - 71, y: 1258, width: 141, height: 19, fill: color });
  label(x - 65, 1268, t, '#000');
}

// Text over the chart
add('text', { x: 174, y: 66, fill: WHITE, 'text-anchor': 'end' }, '2074.43 2073.70 2073.85');
['ADR 3830\u00a0 Today 327 - 9.0%', '-'.repeat(40), 'Price Movement / ADR %', '-'.repeat(40), '0-10%: 100.00%', '10-20%: 100.00%', '20-30%: 100.00%',
  '30-40%: 100.00%', '40-50%: 100.00%', '50-60%: 100.00%', '60-70%: 100.00%', '70-80%: 100.00%', '80-90%: 100.00%', '90-100%: 75.00%', '100%+: 75.00%'
].forEach((t, k) => add('text', { x: 2576, y: 91 + 25 * k, fill: WHITE, class: 'stats', 'text-anchor': 'end' }, t));
```
